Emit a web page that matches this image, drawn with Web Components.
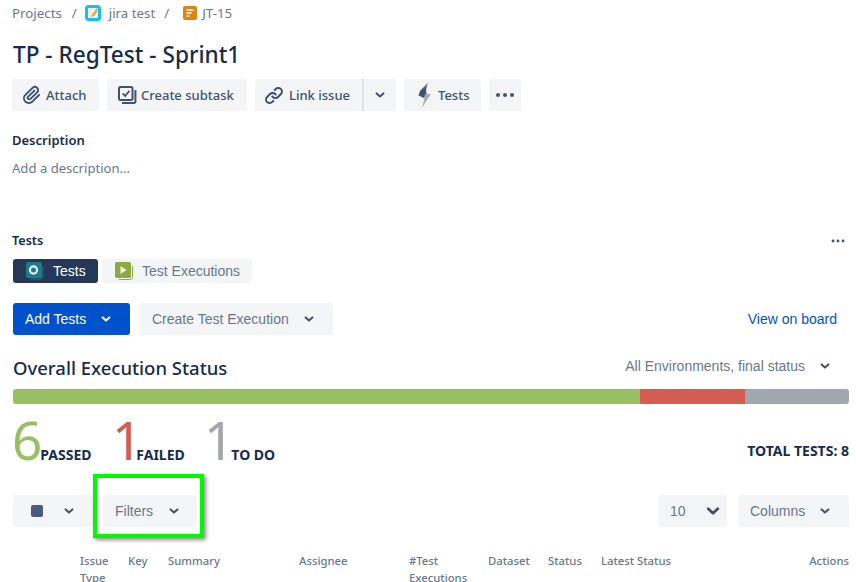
<!DOCTYPE html>
<html><head><meta charset="utf-8"><style>
html,body{margin:0;padding:0;background:#fff;height:582px;overflow:hidden}
body{font-family:"Noto Sans","Open Sans",sans-serif;color:#172b4d}
</style></head><body>
<issue-page></issue-page>
<script>
const chev=(c='#42526e',w=10)=>`<svg width="${w}" height="${w}" viewBox="0 0 10 10"><path d="M1.6 3.4 5 6.6 8.4 3.4" fill="none" stroke="${c}" stroke-width="2" stroke-linecap="round" stroke-linejoin="round"/></svg>`;
const ICONS={
attach:`<svg width="24" height="24" viewBox="0 0 24 24"><path fill="#42526e" fill-rule="evenodd" d="M11.643 17.965c-1.53 1.495-4.016 1.496-5.542.004a3.773 3.773 0 01.002-5.412l7.147-6.985a2.316 2.316 0 013.233-.003c.893.873.895 2.282.004 3.153l-6.703 6.55a.653.653 0 01-.914-.008.62.62 0 010-.902l6.229-6.087a.941.941 0 000-1.353.995.995 0 00-1.384 0l-6.23 6.087a2.502 2.502 0 000 3.607c1.017.994 2.65 1 3.675.002l6.703-6.55a4.074 4.074 0 00-.004-5.859 4.306 4.306 0 00-6.002.003l-7.148 6.985a5.655 5.655 0 00-.001 8.118c2.29 2.239 6.015 2.238 8.305-.004l6.745-6.592a.941.941 0 000-1.353.995.995 0 00-1.384 0l-6.731 6.6z"/></svg>`,
sub:`<svg width="20" height="20" viewBox="0 0 20 20"><rect x="2" y="2" width="13.5" height="13" rx="1.5" fill="none" stroke="#42526e" stroke-width="2"/><path d="M5.6 8.4 8.2 11 12.4 5.8" fill="none" stroke="#42526e" stroke-width="1.8"/><path d="M5 18h12.2a1.2 1.2 0 0 0 1.2-1.2V5" fill="none" stroke="#42526e" stroke-width="2"/></svg>`,
link:`<svg width="24" height="24" viewBox="0 0 24 24"><path fill="#42526e" d="M12.856 5.457l-.937.92a1.002 1.002 0 000 1.437 1.047 1.047 0 001.463 0l.984-.966c.967-.95 2.542-1.135 3.602-.288a2.54 2.54 0 01.203 3.81l-2.903 2.852a2.646 2.646 0 01-3.696 0l-1.11-1.09L9 13.57l1.108 1.089c1.822 1.788 4.802 1.788 6.622 0l2.905-2.852a4.558 4.558 0 00-.357-6.82c-1.893-1.517-4.657-1.183-6.422.47z"/><path fill="#42526e" d="M11.144 19.543l.937-.92a1.002 1.002 0 000-1.437 1.047 1.047 0 00-1.463 0l-.984.966c-.967.95-2.542 1.135-3.602.288a2.54 2.54 0 01-.203-3.81l2.903-2.852a2.646 2.646 0 013.696 0l1.11 1.09L15 11.43l-1.108-1.089c-1.822-1.788-4.802-1.788-6.622 0l-2.905 2.852a4.558 4.558 0 00.357 6.82c1.893 1.517 4.657 1.183 6.422-.47z"/></svg>`,
bolt:`<svg width="16" height="26" viewBox="0 0 16 26"><defs><linearGradient id="b" x1="0" y1="0" x2="0" y2="1"><stop offset="0" stop-color="#8993a4"/><stop offset=".45" stop-color="#42526e"/></linearGradient></defs><path d="M11 .5 3 9l-1.5 4.5L7 16l2.5-4L9 8Z" fill="url(#b)"/><path d="M8 12h6L5 25.5 7.5 16Z" fill="#a5adba"/></svg>`,
dots:`<svg width="20" height="6" viewBox="0 0 20 6"><circle cx="3" cy="3" r="2" fill="#42526e"/><circle cx="10" cy="3" r="2" fill="#42526e"/><circle cx="17" cy="3" r="2" fill="#42526e"/></svg>`,
};
class XBtn extends HTMLElement{
 constructor(){super();const icon=this.getAttribute('icon');
 this.attachShadow({mode:'open'}).innerHTML=`<style>
 :host{display:inline-flex;align-items:center;height:32px;background:var(--bg,#f4f5f7);border-radius:3px;color:var(--fg,#42526e);font:var(--font,500 13px "Noto Sans",sans-serif);box-sizing:border-box;padding:var(--pad,0 12px);gap:var(--gap,6px);white-space:nowrap;flex:none;width:var(--w,auto);justify-content:var(--jc,flex-start)}
 svg{display:block;flex:none}
 </style>${icon?ICONS[icon]:''}<slot></slot>`;}
}
customElements.define('x-btn',XBtn);
class XCrumbs extends HTMLElement{
 constructor(){super();this.attachShadow({mode:'open'}).innerHTML=`<style>
 :host{display:flex;align-items:center;height:26px;font:13.3px "Noto Sans",sans-serif;color:#6b778c}
 i{font-style:normal;margin:0 8px 0 10px}
 svg{display:block;margin-right:8px;flex:none}
 </style><span>Projects</span><i>/</i>
 <svg width="16" height="16" viewBox="0 0 16 16"><rect x="1.5" y="1.5" width="13" height="13" rx="2" fill="#fbfbf6" stroke="#0fc4e8" stroke-width="3"/><path d="M4 5h8M4 7.5h4M4 10h3" stroke="#d9dde3" stroke-width="1"/><path d="M6 12.5l1-3 3.5-4.5 2 1.5-3.5 4.5z" fill="#f6a623"/><path d="M10.5 4.5l2 1.5.8-1-2-1.8z" fill="#ee7d6a"/></svg>
 <span>jira test</span><i style="margin:0 14px 0 9px">/</i>
 <svg width="14" height="14" viewBox="0 0 14 14" style="margin-right:5px"><rect width="14" height="14" rx="2" fill="#dd8513"/><path d="M3.5 4h7M3.5 7h5M3.5 10h3" stroke="#fff" stroke-width="1.4" fill="none"/></svg>
 <span>JT-15</span>`;}
}
customElements.define('x-crumbs',XCrumbs);
class XTab extends HTMLElement{
 constructor(){super();const a=this.hasAttribute('active');
 const ico=a?`<svg width="18" height="18" viewBox="0 0 18 18"><path d="M4 17h10a3 3 0 0 0 3-3V4" fill="none" stroke="#1d6e7d" stroke-width="1"/><rect width="16" height="16" rx="2" fill="#1c7a8c"/><circle cx="7.5" cy="8" r="3.6" fill="none" stroke="#e8f3f5" stroke-width="2.2"/></svg>`
 :`<svg width="18" height="18" viewBox="0 0 18 18"><path d="M4 17.5h11a2.5 2.5 0 0 0 2.5-2.5V4" fill="none" stroke="#8fac3e" stroke-width="1"/><rect width="16" height="16" rx="2" fill="#8fa83f"/><path d="M5.5 4l6 4-6 4z" fill="#f1f4e2"/></svg>`;
 this.attachShadow({mode:'open'}).innerHTML=`<style>
 :host{display:inline-flex;align-items:center;height:24px;border-radius:3px;box-sizing:border-box;padding:0 0 0 13px;gap:9px;white-space:nowrap;font:14px "Liberation Sans",sans-serif;background:${a?'#253858':'#f4f5f7'};color:${a?'#fff':'#6b778c'};width:var(--w)}
 svg{display:block;flex:none}
 </style>${ico}<slot></slot>`;}
}
customElements.define('x-tab',XTab);
class XStat extends HTMLElement{
 constructor(){super();const c=this.getAttribute('color');
 this.attachShadow({mode:'open'}).innerHTML=`<style>
 :host{display:inline-flex;align-items:baseline;width:var(--w)}
 b{font:400 53px/53px "Noto Sans",sans-serif;color:${c};letter-spacing:var(--m,0)}
 span{font:700 14px "Noto Sans",sans-serif;color:#172b4d}
 </style><b>${this.getAttribute('n')}</b><span><slot></slot></span>`;}
}
customElements.define('x-stat',XStat);
class XBar extends HTMLElement{
 constructor(){super();this.attachShadow({mode:'open'}).innerHTML=`<style>
 :host{display:flex;height:15px;border-radius:3px;overflow:hidden}
 .p{width:627px;background:#97c064}
 .f{width:105px;background:#d35d52}
 .t{flex:1;background:#a2a6ae}
 </style><div class="p"></div><div class="f"></div><div class="t"></div>`;}
}
customElements.define('x-bar',XBar);
class XHead extends HTMLElement{
 constructor(){super();const cols=['Issue Type','Key','Summary','Assignee','#Test Executions','Dataset','Status','Latest Status','Actions'];
 this.attachShadow({mode:'open'}).innerHTML=`<style>
 :host{display:grid;grid-template-columns:48px 40px 131px 110px 79px 60px 53px 1fr auto;padding-left:67px;font:500 11.3px/17px "Noto Sans",sans-serif;color:#6b778c}
 </style>`+cols.map(c=>`<div>${c}</div>`).join('');}
}
customElements.define('x-head',XHead);
class IssuePage extends HTMLElement{
 constructor(){super();this.attachShadow({mode:'open'}).innerHTML=`<style>
 :host{display:block;position:relative;box-sizing:border-box;width:856px;height:582px;overflow:hidden;padding:0 7px 0 13px}
 x-crumbs{margin-left:-1px}
 h1{margin:15px 0 10px;font:500 22.6px/28px "Noto Sans",sans-serif;color:#172b4d}
 .row{display:flex;align-items:center}
 .acts{gap:8px;margin-left:-1px}
 .split{display:flex;gap:0}
 .lbl{font:600 13px/20px "Noto Sans",sans-serif;color:#172b4d;margin-left:-1px}
 .ph{font:13.1px/20px "Noto Sans",sans-serif;color:#6b778c;margin-top:8px;margin-left:-1px}
 .sb{justify-content:space-between}
 .tabs{gap:4px;margin-top:8px}
 .ar{--font:14px "Liberation Sans",sans-serif;--fg:#6b778c}
 h2{margin:0;font:500 18.5px/24px "Noto Sans",sans-serif;color:#172b4d}
 a{font:14px "Liberation Sans",sans-serif;color:#0052cc;margin-right:12px}
 .env{display:flex;align-items:center;gap:15px;font:14px "Liberation Sans",sans-serif;color:#6b778c;margin-right:19px}
 .green{position:absolute;left:93px;top:474px;width:111px;height:64px;box-sizing:border-box;border:4px solid #00f800;box-shadow:2px 2px 4px rgba(0,0,0,.45)}
 .gdots{display:block}
 </style>
 <x-crumbs></x-crumbs>
 <h1>TP - RegTest - Sprint1</h1>
 <div class="row acts">
  <x-btn icon="attach" style="--w:87px;--pad:0 0 0 8px;--gap:2px">Attach</x-btn>
  <x-btn icon="sub" style="--w:140px;--pad:0 0 0 10px;--gap:4px">Create subtask</x-btn>
  <div class="split">
   <x-btn icon="link" style="--w:109px;--pad:0 0 0 7px;--gap:3px;border-right:2px solid #dfe1e6;border-radius:3px 0 0 3px">Link issue</x-btn>
   <x-btn style="--w:32px;--pad:0;--jc:center;border-radius:0 3px 3px 0"><span style="display:flex">${chev()}</span></x-btn>
  </div>
  <x-btn icon="bolt" style="--w:77px;--pad:0 0 0 13px;--gap:5px">Tests</x-btn>
  <x-btn icon="dots" style="--w:32px;--pad:0;--jc:center"></x-btn>
 </div>
 <div class="lbl" style="margin-top:19px">Description</div>
 <div class="ph">Add a description...</div>
 <div class="row sb" style="margin-top:53px">
  <div class="lbl" style="font-size:12.6px">Tests</div>
  <svg class="gdots" width="14" height="4" viewBox="0 0 14 4" style="margin-right:4px"><circle cx="2" cy="2" r="1.4" fill="#42526e"/><circle cx="7" cy="2" r="1.4" fill="#42526e"/><circle cx="12" cy="2" r="1.4" fill="#42526e"/></svg>
 </div>
 <div class="row tabs">
  <x-tab active style="--w:85px">Tests</x-tab>
  <x-tab style="--w:150px">Test Executions</x-tab>
 </div>
 <div class="row sb" style="margin-top:20px">
  <div class="row" style="gap:10px">
   <x-btn class="ar" style="--bg:#0052cc;--fg:#fff;--w:117px;--pad:0 0 0 12px;--gap:15px">Add Tests <span style="display:flex;margin-left:0">${chev('#fff')}</span></x-btn>
   <x-btn class="ar" style="--w:193px;--pad:0 0 0 12px;--gap:15px">Create Test Execution <span style="display:flex">${chev()}</span></x-btn>
  </div>
  <a>View on board</a>
 </div>
 <div class="row sb" style="margin-top:21px;height:24px">
  <h2>Overall Execution Status</h2>
  <div class="env" style="position:relative;top:-2px"><span>All Environments, final status</span>${chev()}</div>
 </div>
 <x-bar style="margin-top:9px"></x-bar>
 <div class="row sb" style="margin-top:12px;height:49px;align-items:flex-end">
  <div class="row" style="align-items:baseline;margin-left:-1px;position:relative;top:1px">
   <x-stat n="6" color="#97c064" style="--w:100px;--m:-2px">PASSED</x-stat>
   <x-stat n="1" color="#d35d52" style="--w:92px;--m:-6px">FAILED</x-stat>
   <x-stat n="1" color="#a2a6ae" style="--m:-3px">TO DO</x-stat>
  </div>
  <div style="font:700 14px 'Noto Sans',sans-serif;color:#172b4d;position:relative;top:-5px">TOTAL TESTS: 8</div>
 </div>
 <div class="row sb" style="margin-top:30px">
  <div class="row" style="gap:10px">
   <x-btn class="ar" style="--w:80px;--pad:0 0 0 18px;--gap:21px"><span style="display:block;width:12px;height:12px;border-radius:2px;background:#4a5a7a"></span>${chev()}</x-btn>
   <x-btn class="ar" style="--w:94px;--pad:0 0 0 12px;--gap:16px">Filters ${chev()}</x-btn>
  </div>
  <div class="row" style="gap:11px">
   <x-btn class="ar" style="--w:69px;--pad:0 0 0 12px;--gap:20px">10 ${chev('#42526e',14)}</x-btn>
   <x-btn class="ar" style="--w:111px;--pad:0 0 0 12px;--gap:15px">Columns ${chev()}</x-btn>
  </div>
 </div>
 <x-head style="margin-top:25px"></x-head>
 <div class="green"></div>`;}
}
customElements.define('issue-page',IssuePage);
</script>
</body></html>
